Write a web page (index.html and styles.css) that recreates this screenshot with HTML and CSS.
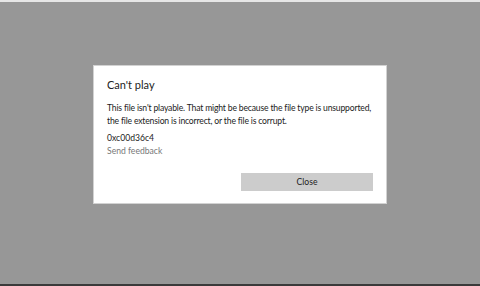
FILE: index.html
```html
<!DOCTYPE html>
<html>
<head>
<meta charset="utf-8">
<link rel="stylesheet" href="styles.css">
</head>
<body>
<div class="screen">
  <div class="topbar"></div>
  <div class="stage">
    <div class="dialog">
      <div class="title">Can't play</div>
      <p class="msg">This file isn't playable. That might be because the file type is unsupported,<br>the file extension is incorrect, or the file is corrupt.</p>
      <div class="code">0xc00d36c4</div>
      <div class="feedback">Send feedback</div>
      <div class="actions"><div class="btn">Close</div></div>
    </div>
  </div>
  <div class="bottombar"></div>
</div>
</body>
</html>
```
FILE: styles.css
```css
html, body { margin: 0; padding: 0; }
body { width: 480px; height: 286px; overflow: hidden; background: #979797; font-family: "Lato", "Noto Sans", sans-serif; }
.screen { display: flex; flex-direction: column; height: 286px; }
.topbar { height: 2px; background: #e6e6e6; flex: none; }
.stage { flex: 1; display: flex; justify-content: flex-start; align-items: flex-start; padding: 63px 0 0 93px; }
.bottombar { height: 2px; background: #3a3a3a; flex: none; }
.dialog { box-sizing: border-box; width: 294px; height: 139px; background: #fff; border: 1px solid #d2d2d2; padding: 10px 13px 0 13px; color: #222; display: flex; flex-direction: column; }
.title { font-size: 11px; line-height: 14px; margin-top: 2px; }
.msg { font-size: 8.6px; letter-spacing: -0.17px; line-height: 13px; margin: 10px 0 0 0; white-space: nowrap; }
.code { font-size: 8.6px; line-height: 13px; margin-top: 4px; }
.feedback { font-size: 8.6px; line-height: 13px; margin-top: 0; color: #777; }
.actions { display: flex; justify-content: flex-end; margin-top: 15px; }
.btn { width: 132px; height: 18px; background: #cccccc; font-size: 8.6px; line-height: 18px; text-align: center; color: #222; }
```
